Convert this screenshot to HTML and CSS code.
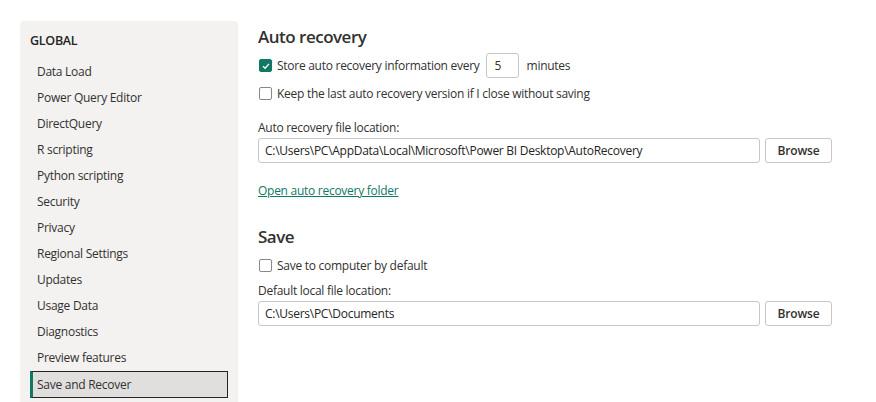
FILE: index.html
```html
<!DOCTYPE html>
<html>
<head>
    <meta name="viewport" content="width=device-width, initial-scale=1.0">
    <link rel="stylesheet" href="styles.css">
</head>
<body>
    <div class="options">
        <div class="sidebar">
            <div class="group-title">GLOBAL</div>
            <div class="nav-item">Data Load</div>
            <div class="nav-item">Power Query Editor</div>
            <div class="nav-item">DirectQuery</div>
            <div class="nav-item">R scripting</div>
            <div class="nav-item">Python scripting</div>
            <div class="nav-item">Security</div>
            <div class="nav-item">Privacy</div>
            <div class="nav-item">Regional Settings</div>
            <div class="nav-item">Updates</div>
            <div class="nav-item">Usage Data</div>
            <div class="nav-item">Diagnostics</div>
            <div class="nav-item">Preview features</div>
            <div class="nav-item selected">Save and Recover</div>
        </div>

        <div class="content">
            <h2 class="section-title">Auto recovery</h2>
            <div class="check-row first">
                <span class="checkbox checked">
                    <svg width="8" height="8" viewBox="0 0 8 8"><path d="M1 4.2 L3.1 6.2 L7 1.9" fill="none" stroke="white" stroke-width="1.3"/></svg>
                </span>
                <span>Store auto recovery information every</span>
                <span class="minutes-box">5</span>
                <span>minutes</span>
            </div>
            <div class="check-row second">
                <span class="checkbox"></span>
                <span>Keep the last auto recovery version if I close without saving</span>
            </div>

            <div class="field-label spaced">Auto recovery file location:</div>
            <div class="path-row">
                <div class="path-input">C:\Users\PC\AppData\Local\Microsoft\Power BI Desktop\AutoRecovery</div>
                <button class="browse">Browse</button>
            </div>
            <a class="folder-link" href="#">Open auto recovery folder</a>

            <h2 class="section-title save">Save</h2>
            <div class="check-row third">
                <span class="checkbox"></span>
                <span>Save to computer by default</span>
            </div>
            <div class="field-label">Default local file location:</div>
            <div class="path-row">
                <div class="path-input">C:\Users\PC\Documents</div>
                <button class="browse">Browse</button>
            </div>
        </div>
    </div>
</body>
</html>
```

FILE: styles.css
```css
* {
    margin: 0;
    padding: 0;
    box-sizing: border-box;
}

body {
    background: white;
    color: #323130;
    font-family: "Open Sans", "Noto Sans", sans-serif;
    font-size: 12px;
    letter-spacing: -0.27px;
    overflow: hidden;
}

.options {
    display: flex;
    padding: 21px 0 0 20px;
    height: 402px;
}

.sidebar {
    width: 218px;
    background: #f3f2f1;
    border-radius: 4px 4px 0 0;
    padding: 10px 10px 0 10px;
}

.group-title {
    font-weight: 600;
    font-size: 12.5px;
    line-height: 20px;
    color: #252423;
    margin-bottom: 8px;
}

.nav-item {
    height: 26px;
    line-height: 26px;
    padding-left: 7px;
    color: #323130;
    font-size: 12px;
}

.nav-item.selected {
    height: 27px;
    line-height: 25px;
    padding-left: 4px;
    background: #e1dfdd;
    border: 1px solid #252423;
    border-left: 3px solid #117865;
}

.content {
    padding-left: 20px;
    width: 600px;
}

.section-title {
    font-size: 17px;
    font-weight: 600;
    letter-spacing: -0.5px;
    line-height: 24px;
    margin-top: 4px;
    color: #323130;
}

.section-title.save {
    margin-top: 25px;
}

.check-row {
    display: flex;
    align-items: center;
    height: 20px;
    color: #323130;
}

.check-row.first {
    height: 25px;
    margin-top: 4px;
}

.check-row.second {
    margin-top: 5px;
}

.check-row.third {
    margin-top: 6px;
}

.checkbox {
    width: 13px;
    height: 13px;
    border: 1px solid #8a8886;
    border-radius: 2px;
    margin: 0 5px 0 1px;
    display: flex;
    justify-content: center;
    align-items: center;
    background: white;
}

.checkbox.checked {
    background: #117865;
    border-color: #117865;
}

.minutes-box {
    width: 33px;
    height: 25px;
    border: 1px solid #c8c6c4;
    border-radius: 3px;
    padding-left: 8px;
    line-height: 23px;
    margin: 0 8px 0 6px;
}

.field-label {
    line-height: 18px;
    margin-top: 7px;
    color: #323130;
}

.field-label.spaced {
    margin-top: 16px;
}

.path-row {
    display: flex;
    gap: 5px;
    margin-top: 1px;
}

.path-input {
    width: 502px;
    height: 25px;
    line-height: 23px;
    border: 1px solid #c8c6c4;
    border-radius: 3px;
    padding-left: 6px;
    color: #252423;
}

.browse {
    width: 67px;
    height: 25px;
    border: 1px solid #c8c6c4;
    border-radius: 3px;
    background: white;
    font-family: inherit;
    font-size: 12px;
    font-weight: 600;
    letter-spacing: -0.2px;
    color: #323130;
}

.folder-link {
    display: inline-block;
    margin-top: 19px;
    line-height: 18px;
    color: #117865;
    text-decoration: underline;
}
```
